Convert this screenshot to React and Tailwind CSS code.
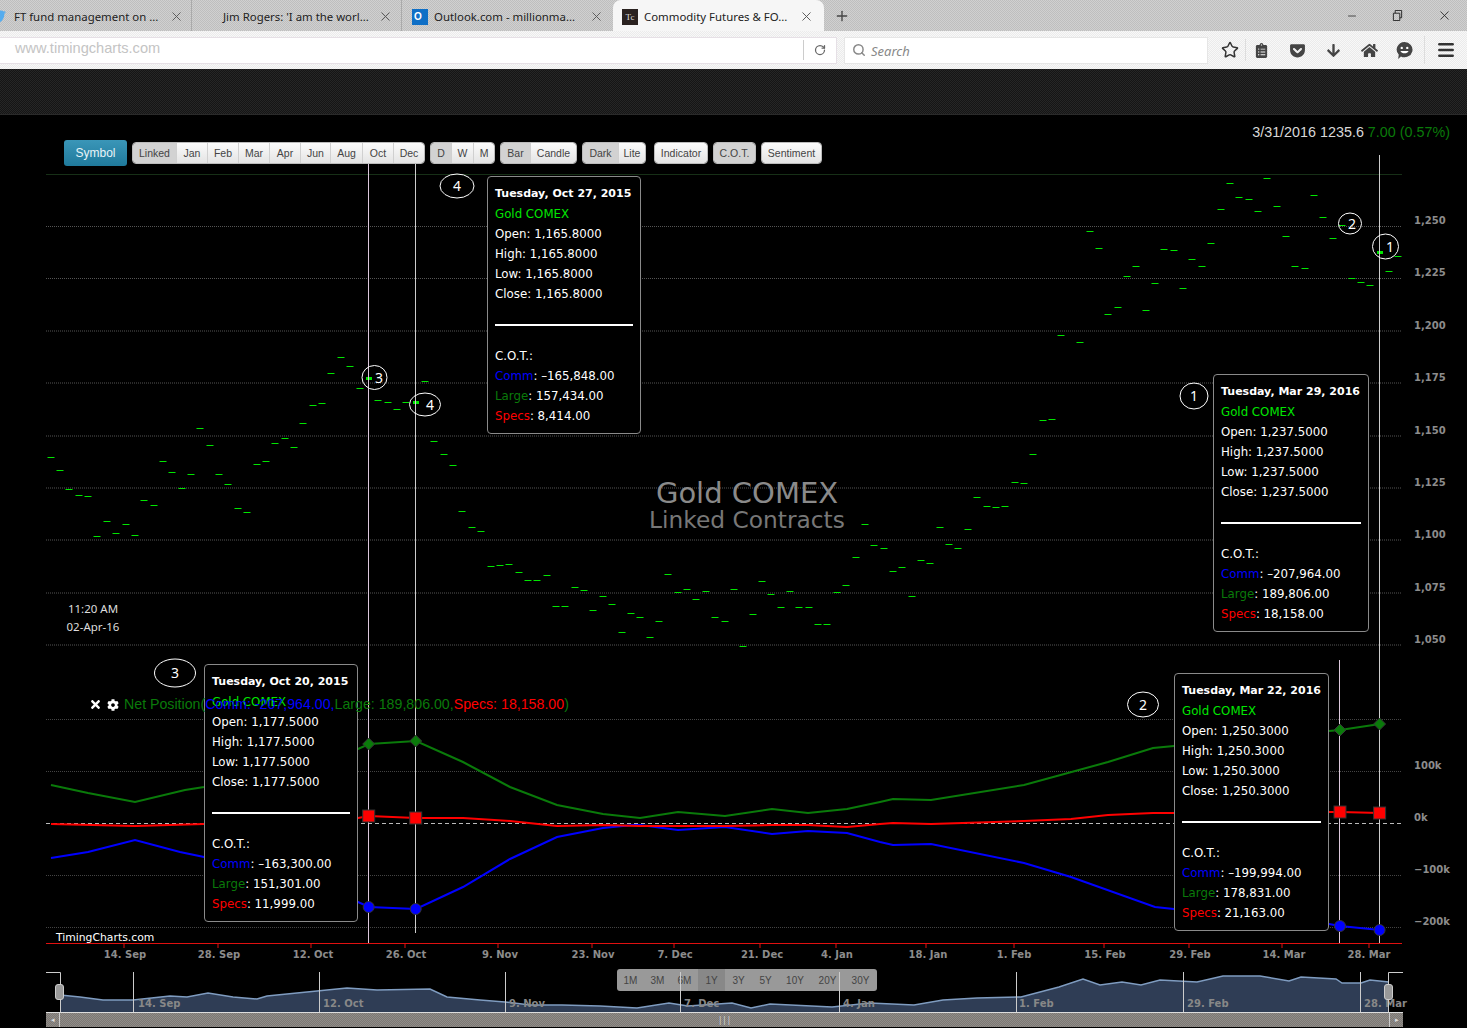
import { X, Minus, Plus, RotateCw, Search, Star, Menu } from 'lucide-react'
import { FaTwitter, FaClipboardList, FaGetPocket, FaArrowDown, FaHome, FaTimes, FaCog } from 'react-icons/fa'

const dashes = [
  [51, 457], [60, 470], [69, 489], [79, 495], [88, 496], [97, 536], [107, 521], [116, 533], [126, 524], [135, 535],
  [144, 500], [154, 505], [163, 461], [172, 472], [182, 488], [191, 474], [200, 428], [210, 445], [219, 474], [228, 484],
  [238, 508], [247, 512], [257, 464], [266, 461], [275, 443], [285, 438], [294, 447], [303, 423], [313, 405], [322, 403],
  [331, 373], [341, 357], [350, 366], [360, 388], [378, 400], [388, 402], [397, 409], [406, 402], [425, 381], [434, 441],
  [444, 454], [453, 465], [462, 511], [472, 527], [481, 531], [491, 566], [500, 565], [509, 564], [519, 572], [528, 580],
  [537, 580], [547, 575], [556, 606], [565, 606], [575, 587], [584, 590], [593, 610], [603, 596], [612, 604], [622, 632],
  [631, 613], [640, 617], [650, 637], [659, 621], [668, 574], [678, 592], [687, 589], [696, 599], [706, 591], [715, 617],
  [725, 621], [734, 589], [743, 646], [753, 614], [762, 581], [771, 594], [781, 607], [790, 591], [799, 607], [809, 607],
  [818, 624], [827, 624], [837, 592], [846, 585], [856, 557], [865, 524], [874, 545], [884, 548], [893, 571], [902, 567],
  [912, 596], [921, 560], [930, 563], [940, 527], [949, 544], [958, 548], [968, 529], [977, 497], [987, 506], [996, 507],
  [1005, 506], [1015, 482], [1024, 483], [1033, 454], [1043, 420], [1052, 419], [1061, 335], [1080, 342], [1090, 231],
  [1099, 248], [1108, 314], [1118, 307], [1127, 276], [1136, 266], [1146, 310], [1155, 283], [1164, 249], [1174, 250],
  [1183, 288], [1192, 259], [1202, 266], [1211, 243], [1221, 209], [1230, 183], [1239, 197], [1249, 199], [1258, 211],
  [1267, 178], [1277, 206], [1286, 236], [1295, 266], [1305, 268], [1314, 195], [1323, 217], [1333, 238], [1342, 225],
  [1352, 278], [1361, 282], [1370, 285], [1389, 271], [1398, 256],
]

const priceLabels = [
  ['1,250', 220], ['1,225', 272], ['1,200', 325], ['1,175', 377], ['1,150', 430],
  ['1,125', 482], ['1,100', 534], ['1,075', 587], ['1,050', 639],
]
const cotLabels = [['100k', 765], ['0k', 817], ['−100k', 869], ['−200k', 921]]

const dateLabels = [
  ['14. Sep', 125, 124], ['28. Sep', 219, 218], ['12. Oct', 313, 311], ['26. Oct', 406, 405], ['9. Nov', 500, 498],
  ['23. Nov', 593, 592], ['7. Dec', 675, 674], ['21. Dec', 762, 760], ['4. Jan', 837, 836], ['18. Jan', 928, 926],
  ['1. Feb', 1014, 1014], ['15. Feb', 1105, 1104], ['29. Feb', 1190, 1189], ['14. Mar', 1284, 1282], ['28. Mar', 1369, 1369],
]

const navLabels = [
  ['14. Sep', 138, 133], ['12. Oct', 323, 319], ['9. Nov', 509, 505], ['7. Dec', 684, 680],
  ['4. Jan', 843, 839], ['1. Feb', 1019, 1016], ['29. Feb', 1187, 1183], ['28. Mar', 1364, 1360],
]

const greenLine = '51,785 88,793 135,802 185,790 204,787 358,749 369,744 416,741 463,762 510,787 557,805 603,814 640,818 678,812 725,816 772,809 808,813 847,809 880,802 893,799 931,800 1024,785 1108,762 1153,748 1174,746 1329,731 1340,730 1380,724'
const redLine = '51,824 135,826 204,824 358,818 369,816 416,818 463,818 510,821 557,826 603,825 640,826 678,826 725,826 772,825 808,825 847,827 880,824 893,823 931,824 1024,821 1071,819 1108,815 1153,813 1174,813 1329,812 1340,812 1380,813'
const blueLine = '51,858 88,852 135,840 180,852 204,857 358,902 369,907 416,909 463,887 510,859 557,837 603,828 633,825 640,825 678,830 725,827 772,834 808,831 847,833 880,842 893,845 931,844 1024,863 1071,877 1155,907 1174,909 1329,924 1340,926 1380,930'
const navLine = '60,995 80,997 103,1000 133,1000 170,996 187,997 208,993 233,997 257,999 267,996 317,991 347,988 377,990 430,989 447,997 480,1000 505,1002 530,1005 562,1005 600,1006 637,1008 669,1003 688,1006 732,1003 751,1008 770,1004 832,1007 870,1003 914,1005 943,1000 977,998 1021,997 1059,987 1083,979 1100,985 1122,982 1141,985 1160,980 1197,982 1223,976 1260,976 1289,981 1301,977 1336,979 1342,983 1361,983 1370,980 1389,982'

const circles = [
  ['4', 457, 186, 17, 12, 457],
  ['3', 374.5, 377.5, 12.5, 12, 379],
  ['4', 425, 404.5, 15.5, 11.5, 430],
  ['2', 1350, 223.5, 11.5, 10.5, 1352],
  ['1', 1385.5, 246.5, 13, 12.5, 1390],
  ['1', 1194, 396, 14, 13, 1194],
  ['3', 175, 673, 20.5, 14, 175],
  ['2', 1143, 704.5, 15.5, 12.5, 1143],
]

const ranges = [
  ['1M', 'w-[27px]'], ['3M', 'w-[27px]'], ['6M', 'w-[27px]'], ['1Y', 'w-[27px] bg-[#888]'], ['3Y', 'w-[27px]'],
  ['5Y', 'w-[27px]'], ['10Y', 'w-[32px]'], ['20Y', 'w-[33px]'], ['30Y', 'w-[33px]'],
]

const tabFont = "font-['Noto_Sans',sans-serif] text-[11.4px] text-[#222]"
const chartFont = "font-['DejaVu_Sans',sans-serif]"

const Tab = ({ className, icon, title }) => (
  <div className={`flex items-center h-full shrink-0 pt-[2px] ${className}`}>
    {icon}
    <span className={`w-[146px] whitespace-nowrap ${tabFont}`}>{title}</span>
    <X className="w-[15px] h-[15px] ml-[9px] text-[#555]" strokeWidth={1.5} />
  </div>
)

const Cell = ({ label, className, active }) => (
  <div
    className={`h-full flex items-center justify-center pt-px border-r border-[#d0d0d0] last:border-r-0 text-[10.5px] text-[#444] ${className} ${
      active ? 'bg-[#d2d2d2]' : 'bg-linear-to-b from-[#fbfbfb] to-[#e4e4e4]'
    }`}
  >
    {label}
  </div>
)

const Group = ({ children }) => (
  <div className="flex h-[22px] rounded-[4px] overflow-hidden border border-[#bbb] font-['Liberation_Sans',sans-serif]">
    {children}
  </div>
)

const Tooltip = ({ className, date, price, comm, large, specs }) => (
  <div className={`absolute h-[258px] bg-black border border-[#8a8a8a] rounded-[4px] px-[7px] pt-[7px] text-white text-[11.8px] leading-[20px] ${chartFont} ${className}`}>
    <div className="text-[11px] font-bold whitespace-nowrap">{date}</div>
    <div className="text-[#00e600]">Gold COMEX</div>
    <div>Open: {price}</div>
    <div>High: {price}</div>
    <div>Low: {price}</div>
    <div>Close: {price}</div>
    <div className="h-[2px] bg-white mt-[20px] mb-[20px]" />
    <div>C.O.T.:</div>
    <div><span className="text-[#0000ff]">Comm</span>: {comm}</div>
    <div><span className="text-[#0a7a0a]">Large</span>: {large}</div>
    <div><span className="text-[#ff0000]">Specs</span>: {specs}</div>
  </div>
)

const Markers = ({ x, green, red, blue }) => (
  <g>
    <path d={`M${x} ${green - 6}L${x + 6} ${green}L${x} ${green + 6}L${x - 6} ${green}Z`} fill="#0a7a0a" stroke="#333" />
    <rect x={x - 6} y={red - 6} width="12" height="12" fill="#ff0000" stroke="#333" />
    <circle cx={x} cy={blue} r="5.5" fill="#0000ff" stroke="#333" />
  </g>
)

export default function App() {
  return (
    <div className="w-full h-[1028px] flex flex-col overflow-hidden bg-black">
      {/* Browser tabs */}
      <div className="h-[31px] shrink-0 flex items-center bg-[repeating-conic-gradient(#d0d0d0_0_25%,#bebebe_0_50%)] bg-size-[2px_2px]">
        <Tab
          className="w-[192px] pl-[14px] border-r border-[#aaa] relative"
          title="FT fund management on ..."
          icon={<FaTwitter className="absolute -left-[10px] w-[16px] h-[16px] text-[#55acee]" />}
        />
        <Tab className="w-[210px] pl-[31px] border-r border-[#aaa]" title="Jim Rogers: 'I am the worl..." />
        <Tab
          className="w-[211px] pl-[10px]"
          title="Outlook.com - millionma..."
          icon={
            <div className="w-[16px] h-[16px] mr-[6px] bg-[#0f6fc6] text-white text-[10px] font-bold leading-[16px] pl-[2px] font-['Liberation_Sans',sans-serif]">O</div>
          }
        />
        <Tab
          className="w-[211px] pl-[9px] bg-[#f6f6f6] rounded-t-[8px]"
          title="Commodity Futures & FO..."
          icon={
            <div className="w-[16px] h-[16px] mr-[6px] bg-[#2a2220] text-[#ddd] text-[9px] leading-[16px] text-center font-['Liberation_Serif',serif]">Tc</div>
          }
        />
        <Plus className="w-[16px] h-[16px] ml-[10px] text-[#444]" strokeWidth={2} />
        <div className="ml-auto flex items-center text-[#222]">
          <Minus className="w-[12px] h-[12px] mr-[34px]" strokeWidth={1.5} />
          <svg viewBox="0 0 12 12" className="w-[11px] h-[11px] mr-[34px]" fill="none" stroke="currentColor">
            <path d="M1.5 3.5h7v8h-7zM3.5 3.5v-3h7v8h-2" />
          </svg>
          <X className="w-[15px] h-[15px] mr-[15px]" strokeWidth={1.25} />
        </div>
      </div>

      {/* Browser toolbar */}
      <div className="h-[38px] shrink-0 flex items-center bg-[repeating-conic-gradient(#f8f8f8_0_25%,#ebebeb_0_50%)] bg-size-[2px_2px]">
        <div className="w-[837px] h-[27px] flex items-center bg-white border-y border-r border-[#e6e0e6] pl-[15px]">
          <span className="w-[788px] pb-[3px] text-[14.6px] text-[#c4c4c4] font-['Liberation_Sans',sans-serif]">www.timingcharts.com</span>
          <div className="w-px h-[20px] bg-[#ccc]" />
          <RotateCw className="w-[12px] h-[12px] ml-[10px] text-[#666]" strokeWidth={2.5} />
        </div>
        <div className="w-[364px] h-[27px] ml-[7px] flex items-center bg-white border border-[#e6e6e6] pl-[7px]">
          <Search className="w-[14px] h-[14px] text-[#888]" strokeWidth={2.5} />
          <span className="ml-[5px] pt-[3px] text-[13px] italic text-[#888] font-['Noto_Sans',sans-serif]">Search</span>
        </div>
        <div className="flex-1 flex items-center text-[#444] pl-[13px]">
          <Star className="w-[18px] h-[18px] text-[#333]" strokeWidth={2} />
          <div className="w-px h-[22px] bg-[#ddd] ml-[6px]" />
          <FaClipboardList className="w-[15px] h-[15px] ml-[8px]" />
          <FaGetPocket className="w-[17px] h-[17px] ml-[20px]" />
          <FaArrowDown className="w-[15px] h-[15px] ml-[20px]" />
          <FaHome className="w-[17px] h-[17px] ml-[20px]" />
          <svg viewBox="0 0 16 16" className="w-[17px] h-[17px] ml-[18px]">
            <path d="M8 0a7.5 7.2 0 1 1-3.4 13.6L2 16l.6-4A7.5 7.2 0 0 1 8 0z" fill="currentColor" />
            <circle cx="5.4" cy="5.6" r="1.1" fill="#fff" />
            <circle cx="10.6" cy="5.6" r="1.1" fill="#fff" />
            <path d="M4.2 8.4c1 3 6.6 3 7.6 0z" fill="#fff" />
          </svg>
          <div className="w-px h-[28px] bg-[#ddd] ml-[11px]" />
          <Menu className="w-[20px] h-[20px] ml-[11px] text-[#333]" strokeWidth={3} />
        </div>
      </div>

      {/* Empty dark header of the page */}
      <div className="h-[46px] shrink-0 bg-[repeating-conic-gradient(#262626_0_25%,#151515_0_50%)] bg-size-[2px_2px] border-b border-[#2a2a2a]" />

      {/* Chart page */}
      <div className="relative flex-1 bg-black">
        <svg className="absolute inset-0 w-[1467px] h-[913px]" viewBox="0 115 1467 913">
          {/* price chart */}
          <line x1="46" x2="1402" y1="174.5" y2="174.5" stroke="#173017" />
          {[226.5, 278.5, 331, 383, 436, 488, 540, 593, 645].map((y) => (
            <line key={y} x1="46" x2="1402" y1={y} y2={y} stroke="#555" strokeDasharray="1 1" />
          ))}
          {dashes.map(([x, y]) => (
            <rect key={x} x={x - 3.5} y={y} width="7" height="1" fill="#00e600" />
          ))}
          <rect x="366" y="377" width="6" height="3" fill="#00e600" />
          <rect x="413" y="401" width="6" height="3" fill="#00e600" />
          <rect x="1377" y="251" width="6" height="3" fill="#00e600" />
          {priceLabels.map(([label, y]) => (
            <text key={label} x="1414" y={y + 4} fontSize="10" fontWeight="700" fill="#8c8c8c" className={chartFont}>{label}</text>
          ))}
          <text x="747" y="503" textAnchor="middle" fontSize="29" fill="#8a8a8a" className={chartFont}>Gold COMEX</text>
          <text x="747" y="528" textAnchor="middle" fontSize="23.3" fill="#777" className={chartFont}>Linked Contracts</text>

          {/* C.O.T. chart */}
          {[719.5, 771.5, 875.5, 927.5].map((y) => (
            <line key={y} x1="46" x2="1402" y1={y} y2={y} stroke="#444" strokeDasharray="1 1" />
          ))}
          <line x1="46" x2="1402" y1="823.5" y2="823.5" stroke="#bbb" strokeDasharray="4 3" />
          <polyline points={greenLine} fill="none" stroke="#0a7a0a" strokeWidth="2" />
          <polyline points={blueLine} fill="none" stroke="#0000ff" strokeWidth="2" />
          <polyline points={redLine} fill="none" stroke="#ff0000" strokeWidth="2" />
          {cotLabels.map(([label, y]) => (
            <text key={label} x="1414" y={y + 4} fontSize="10" fontWeight="700" fill="#8c8c8c" className={chartFont}>{label}</text>
          ))}

          {/* crosshair lines */}
          <line x1="368.5" x2="368.5" y1="163" y2="943" stroke="#dcc8dc" />
          <line x1="415.5" x2="415.5" y1="163" y2="933" stroke="#ccc" />
          <line x1="1339.5" x2="1339.5" y1="660" y2="943" stroke="#dcc8dc" />
          <line x1="1379.5" x2="1379.5" y1="155" y2="943" stroke="#ccc" />
          <Markers x={368.7} green={744} red={816} blue={907} />
          <Markers x={415.7} green={741} red={818} blue={909} />
          <Markers x={1340} green={730} red={812} blue={926} />
          <Markers x={1379.6} green={724} red={813} blue={930} />

          {/* hand drawn notes */}
          {circles.map(([label, cx, cy, rx, ry, tx]) => (
            <g key={`${label}-${cx}`}>
              <ellipse cx={cx} cy={cy} rx={rx} ry={ry} fill="none" stroke="#fff" />
              <text x={tx} y={cy + 5} textAnchor="middle" fontSize="14" fill="#fff" className="font-['Noto_Sans',sans-serif]">{label}</text>
            </g>
          ))}

          {/* date axis */}
          <line x1="46" x2="1402" y1="943.5" y2="943.5" stroke="#e01010" />
          {dateLabels.map(([label, x, tick]) => (
            <g key={label}>
              <line x1={tick} x2={tick} y1="943" y2="948" stroke="#e01010" />
              <text x={x} y="958" textAnchor="middle" fontSize="10" fontWeight="700" fill="#8c8c8c" className={chartFont}>{label}</text>
            </g>
          ))}
          <text x="56" y="941" fontSize="10.8" fill="#fff" className={chartFont}>TimingCharts.com</text>

          {/* navigator */}
          <polygon points={`${navLine} 1389,1012 60,1012`} fill="#2f3d55" />
          <polyline points={navLine} fill="none" stroke="#7f9cc0" strokeWidth="1.5" />
          {navLabels.map(([label, x]) => (
            <text key={label} x={x} y="1007" fontSize="10" fontWeight="700" fill="#888" className={chartFont}>{label}</text>
          ))}
          <path d="M46 972.5H60.5V1012" fill="none" stroke="#ccc" />
          <path d="M1403 972.5H1388.5V1012" fill="none" stroke="#ccc" />
          <rect x="55.5" y="984.5" width="8" height="15" rx="2.5" fill="#999" stroke="#ccc" />
          <rect x="1384.5" y="984.5" width="8" height="15" rx="2.5" fill="#999" stroke="#ccc" />
        </svg>

        {/* Chart controls */}
        <div className="relative flex items-center pl-[64px] pt-[25px] gap-[5px]">
          <div className="w-[63px] h-[26px] flex items-center justify-center rounded-[3px] bg-linear-to-b from-[#3a96b8] to-[#1f7a9c] text-[12px] text-[#e8f4f8] font-['Liberation_Sans',sans-serif]">
            Symbol
          </div>
          <Group>
            <Cell label="Linked" className="w-[44px]" active />
            <Cell label="Jan" className="w-[31px]" />
            <Cell label="Feb" className="w-[31px]" />
            <Cell label="Mar" className="w-[31px]" />
            <Cell label="Apr" className="w-[31px]" />
            <Cell label="Jun" className="w-[30px]" />
            <Cell label="Aug" className="w-[32px]" />
            <Cell label="Oct" className="w-[31px]" />
            <Cell label="Dec" className="w-[30px]" />
          </Group>
          <Group>
            <Cell label="D" className="w-[21px]" active />
            <Cell label="W" className="w-[22px]" />
            <Cell label="M" className="w-[20px]" />
          </Group>
          <Group>
            <Cell label="Bar" className="w-[30px]" active />
            <Cell label="Candle" className="w-[45px]" />
          </Group>
          <Group>
            <Cell label="Dark" className="w-[36px]" active />
            <Cell label="Lite" className="w-[26px]" />
          </Group>
          <div className="ml-[3px]">
            <Group>
              <Cell label="Indicator" className="w-[52px]" />
            </Group>
          </div>
          <Group>
            <Cell label="C.O.T." className="w-[41px]" active />
          </Group>
          <Group>
            <Cell label="Sentiment" className="w-[59px]" />
          </Group>
        </div>

        <div className="absolute right-[17px] top-[7px] text-[14.35px] text-[#d8d8d8] font-['Liberation_Sans',sans-serif]">
          3/31/2016 1235.6 <span className="text-[#0a7a0a]">7.00 (0.57%)</span>
        </div>

        <div className="absolute left-[53px] top-[485px] w-[80px] text-center text-[11.5px] leading-[18px] text-[#ddd] whitespace-nowrap font-['Noto_Sans',sans-serif]">
          <div>11:20 AM</div>
          <div>02-Apr-16</div>
        </div>

        <Tooltip className="left-[487px] top-[61px] w-[154px]" date="Tuesday, Oct 27, 2015" price="1,165.8000" comm="–165,848.00" large="157,434.00" specs="8,414.00" />
        <Tooltip className="left-[1213px] top-[259px] w-[156px]" date="Tuesday, Mar 29, 2016" price="1,237.5000" comm="–207,964.00" large="189,806.00" specs="18,158.00" />
        <Tooltip className="left-[204px] top-[549px] w-[154px]" date="Tuesday, Oct 20, 2015" price="1,177.5000" comm="–163,300.00" large="151,301.00" specs="11,999.00" />
        <Tooltip className="left-[1174px] top-[558px] w-[155px]" date="Tuesday, Mar 22, 2016" price="1,250.3000" comm="–199,994.00" large="178,831.00" specs="21,163.00" />

        {/* Indicator legend, it sits over the tooltip */}
        <div className="absolute left-[89px] top-[579px] flex items-center text-[14.2px] text-[#0a7a0a] whitespace-nowrap font-['Liberation_Sans',sans-serif]">
          <FaTimes className="w-[13px] h-[13px] text-white" />
          <FaCog className="w-[12px] h-[12px] ml-[5px] text-white" />
          <span className="ml-[5px]">Net Position(</span>
          <span className="text-[#0000ff]">Comm: -207,964.00,</span>
          <span>Large: 189,806.00,</span>
          <span className="text-[#ff0000]">Specs: 18,158.00</span>
          <span>)</span>
        </div>

        {/* Range selector */}
        <div className="absolute left-[617px] top-[854px] h-[22px] flex rounded-[3px] overflow-hidden bg-[#999] font-['Liberation_Sans',sans-serif]">
          {ranges.map(([label, cls]) => (
            <div key={label} className={`h-full flex items-center justify-center text-[10px] text-[#444] ${cls}`}>{label}</div>
          ))}
        </div>

        {/* Navigator lines pass over the range selector */}
        <svg className="absolute inset-0 w-[1467px] h-[913px] pointer-events-none" viewBox="0 115 1467 913">
          {navLabels.map(([label, , x]) => (
            <line key={label} x1={x + 0.5} x2={x + 0.5} y1="972" y2="1012" stroke="#ccc" />
          ))}
        </svg>

        {/* Navigator scrollbar */}
        <div className="absolute left-[46px] top-[897px] w-[1357px] h-[15px] flex items-center border-t border-[#ddd] bg-[repeating-conic-gradient(#908c88_0_25%,#7c7874_0_50%)] bg-size-[2px_2px]">
          <div className="w-[14px] h-full flex items-center justify-center border-r border-[#ccc] text-[7px] text-[#ddd]">◂</div>
          <div className="flex-1 text-center text-[8px] leading-none text-[#ddd]">|||</div>
          <div className="w-[14px] h-full flex items-center justify-center border-l border-[#ccc] text-[7px] text-[#ddd]">▸</div>
        </div>
      </div>
    </div>
  )
}
